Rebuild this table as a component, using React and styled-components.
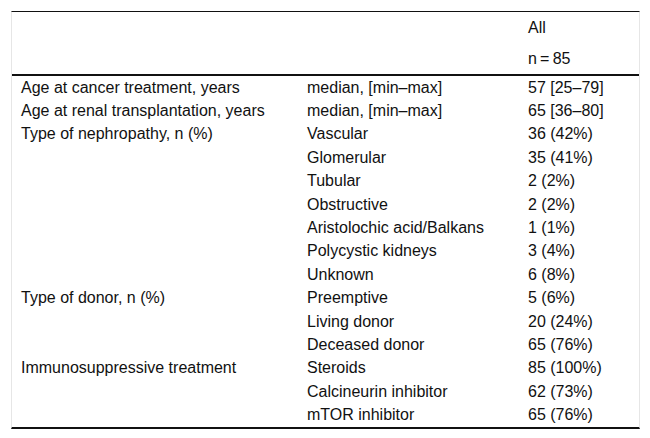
import styled, { createGlobalStyle } from 'styled-components';

const GlobalStyle = createGlobalStyle`
    body {
        margin: 0;
        background: #fff;
        font-family: "Liberation Sans", Arial, sans-serif;
        color: #111;
    }
`;

const Page = styled.div`
    padding: 11px 10px 0 11px;
`;

const Table = styled.div`
    width: 629px;
    border-left: 1px solid #e6e6e6;
    border-right: 1px solid #e6e6e6;
    border-top: 1px solid #111;
    border-bottom: 2px solid #111;
    box-sizing: border-box;
`;

const Head = styled.div`
    display: grid;
    grid-template-columns: 286px 221px 1fr;
    border-bottom: 2px solid #111;
    height: 64px;
    box-sizing: border-box;
`;

const HeadCell = styled.div`
    display: flex;
    flex-direction: column;
    justify-content: space-around;
    padding-left: 9px;
    padding-bottom: 0;
    font-size: 16px;
    line-height: 18px;
`;

const Row = styled.div`
    display: grid;
    grid-template-columns: 286px 221px 1fr;
    height: 23.4px;
    align-items: center;
    font-size: 16px;
    line-height: 18px;
`;

const Cell = styled.div`
    padding-left: 9px;
    white-space: nowrap;
`;

const rows = [
    ['Age at cancer treatment, years', 'median, [min\u2013max]', '57 [25\u201379]'],
    ['Age at renal transplantation, years', 'median, [min\u2013max]', '65 [36\u201380]'],
    ['Type of nephropathy, n (%)', 'Vascular', '36 (42%)'],
    ['', 'Glomerular', '35 (41%)'],
    ['', 'Tubular', '2 (2%)'],
    ['', 'Obstructive', '2 (2%)'],
    ['', 'Aristolochic acid/Balkans', '1 (1%)'],
    ['', 'Polycystic kidneys', '3 (4%)'],
    ['', 'Unknown', '6 (8%)'],
    ['Type of donor, n (%)', 'Preemptive', '5 (6%)'],
    ['', 'Living donor', '20 (24%)'],
    ['', 'Deceased donor', '65 (76%)'],
    ['Immunosuppressive treatment', 'Steroids', '85 (100%)'],
    ['', 'Calcineurin inhibitor', '62 (73%)'],
    ['', 'mTOR inhibitor', '65 (76%)'],
];

export default function App() {
    return (
        <>
            <GlobalStyle />
            <Page>
                <Table>
                    <Head>
                        <HeadCell />
                        <HeadCell />
                        <HeadCell>
                            <span>All</span>
                            <span>n{'\u2009'}={'\u2009'}85</span>
                        </HeadCell>
                    </Head>
                    {rows.map((r, i) => (
                        <Row key={i}>
                            <Cell>{r[0]}</Cell>
                            <Cell>{r[1]}</Cell>
                            <Cell>{r[2]}</Cell>
                        </Row>
                    ))}
                </Table>
            </Page>
        </>
    );
}
